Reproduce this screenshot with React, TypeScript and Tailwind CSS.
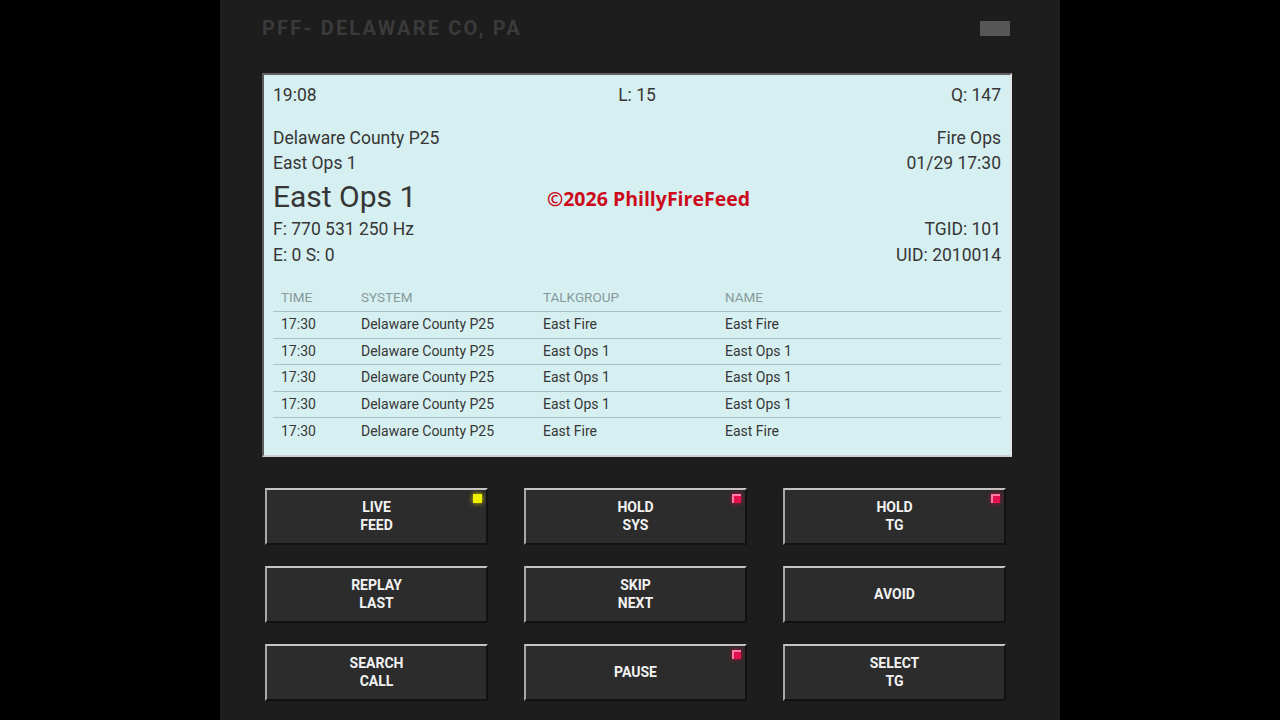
import React from "react";

type Call = { time: string; system: string; talkgroup: string; name: string };

const calls: Call[] = [
  { time: "17:30", system: "Delaware County P25", talkgroup: "East Fire", name: "East Fire" },
  { time: "17:30", system: "Delaware County P25", talkgroup: "East Ops 1", name: "East Ops 1" },
  { time: "17:30", system: "Delaware County P25", talkgroup: "East Ops 1", name: "East Ops 1" },
  { time: "17:30", system: "Delaware County P25", talkgroup: "East Ops 1", name: "East Ops 1" },
  { time: "17:30", system: "Delaware County P25", talkgroup: "East Fire", name: "East Fire" },
];

type Btn = { lines: string[]; led?: "yellow" | "red" };

const buttons: Btn[] = [
  { lines: ["LIVE", "FEED"], led: "yellow" },
  { lines: ["HOLD", "SYS"], led: "red" },
  { lines: ["HOLD", "TG"], led: "red" },
  { lines: ["REPLAY", "LAST"] },
  { lines: ["SKIP", "NEXT"] },
  { lines: ["AVOID"] },
  { lines: ["SEARCH", "CALL"] },
  { lines: ["PAUSE"], led: "red" },
  { lines: ["SELECT", "TG"] },
];

function Led({ color }: { color: "yellow" | "red" }) {
  if (color === "yellow") {
    return (
      <span className="absolute right-[4px] top-[4px] h-[9px] w-[9px] bg-[#f2ef00] shadow-[0_0_5px_#d8d400]" />
    );
  }
  return (
    <span className="absolute right-[4px] top-[4px] h-[9px] w-[9px] border-l-2 border-t-2 border-l-[#ff7aa4] border-t-[#ff7aa4] bg-[#e3124f] shadow-[0_0_5px_#c0103f]" />
  );
}

function ScannerButton({ b }: { b: Btn }) {
  return (
    <button className="relative flex h-[57px] flex-col items-center justify-center border-2 border-b-[#121212] border-l-[#a8a8a8] border-r-[#121212] border-t-[#c4c4c4] bg-[#2c2c2c] text-[14px] font-bold leading-[18px] text-[#f2f2f2]">
      {b.lines.map((l) => (
        <span key={l}>{l}</span>
      ))}
      {b.led && <Led color={b.led} />}
    </button>
  );
}

export default function App() {
  return (
    <div className="flex h-[720px] w-[1280px] justify-center overflow-hidden bg-black font-['Roboto','Liberation_Sans',sans-serif]">
      <div className="flex w-[840px] flex-col bg-[#1d1d1d] px-[42px]">
        {/* title bar */}
        <div className="flex h-[73px] items-start justify-between pt-[15px]">
          <div className="text-[20px] font-bold leading-[26px] tracking-[2.2px] text-[#3a3a3a]">
            PFF- DELAWARE CO, PA
          </div>
          <div className="mr-[8px] mt-[6px] h-[15px] w-[30px] bg-[#565656]" />
        </div>

        {/* display */}
        <div className="relative w-[750px] border-2 border-b-[#cfcfcf] border-l-[#5a5a5a] border-r-[#e4e4e4] border-t-[#606060] bg-[#d6f0f1] px-[9px] pb-[10px] pt-[8px] text-[#363636]">
          <div className="grid grid-cols-3 text-[17.5px] leading-[24px]">
            <span>19:08</span>
            <span className="text-center">L: 15</span>
            <span className="text-right">Q: 147</span>
          </div>

          <div className="mt-[19px] flex justify-between text-[17.5px] leading-[25px]">
            <div>
              <div>Delaware County P25</div>
              <div>East Ops 1</div>
            </div>
            <div className="text-right">
              <div>Fire Ops</div>
              <div>01/29 17:30</div>
            </div>
          </div>

          <div className="mt-[4px] text-[30px] leading-[34px]">East Ops 1</div>

          <div className="mt-[2px] flex justify-between text-[17.5px] leading-[26px]">
            <div>
              <div>F: 770 531 250 Hz</div>
              <div>E: 0 S: 0</div>
            </div>
            <div className="text-right">
              <div>TGID: 101</div>
              <div>UID: 2010014</div>
            </div>
          </div>

          <div className="absolute left-[283px] top-[111px] font-['Open_Sans',sans-serif] text-[19.5px] font-bold leading-[26px] text-[#cc0a1c]">
            ©2026 PhillyFireFeed
          </div>

          {/* recent calls */}
          <div className="mt-[15px] text-[14px]">
            <div className="grid h-[29px] grid-cols-[80px_182px_182px_1fr] items-center border-b border-[#a6c4c4] pl-[8px] text-[13.5px] uppercase text-[#87999a]">
              <span>Time</span>
              <span>System</span>
              <span>Talkgroup</span>
              <span>Name</span>
            </div>
            {calls.map((c, i) => (
              <div
                key={i}
                className={`grid h-[26.5px] grid-cols-[80px_182px_182px_1fr] items-center pl-[8px] ${
                  i < calls.length - 1 ? "border-b border-[#a6c4c4]" : ""
                }`}
              >
                <span>{c.time}</span>
                <span>{c.system}</span>
                <span>{c.talkgroup}</span>
                <span>{c.name}</span>
              </div>
            ))}
          </div>
        </div>

        {/* buttons */}
        <div className="ml-[3px] mt-[31px] grid grid-cols-[223px_223px_223px] gap-x-[36px] gap-y-[21px]">
          {buttons.map((b) => (
            <ScannerButton key={b.lines.join(" ")} b={b} />
          ))}
        </div>
      </div>
    </div>
  );
}
